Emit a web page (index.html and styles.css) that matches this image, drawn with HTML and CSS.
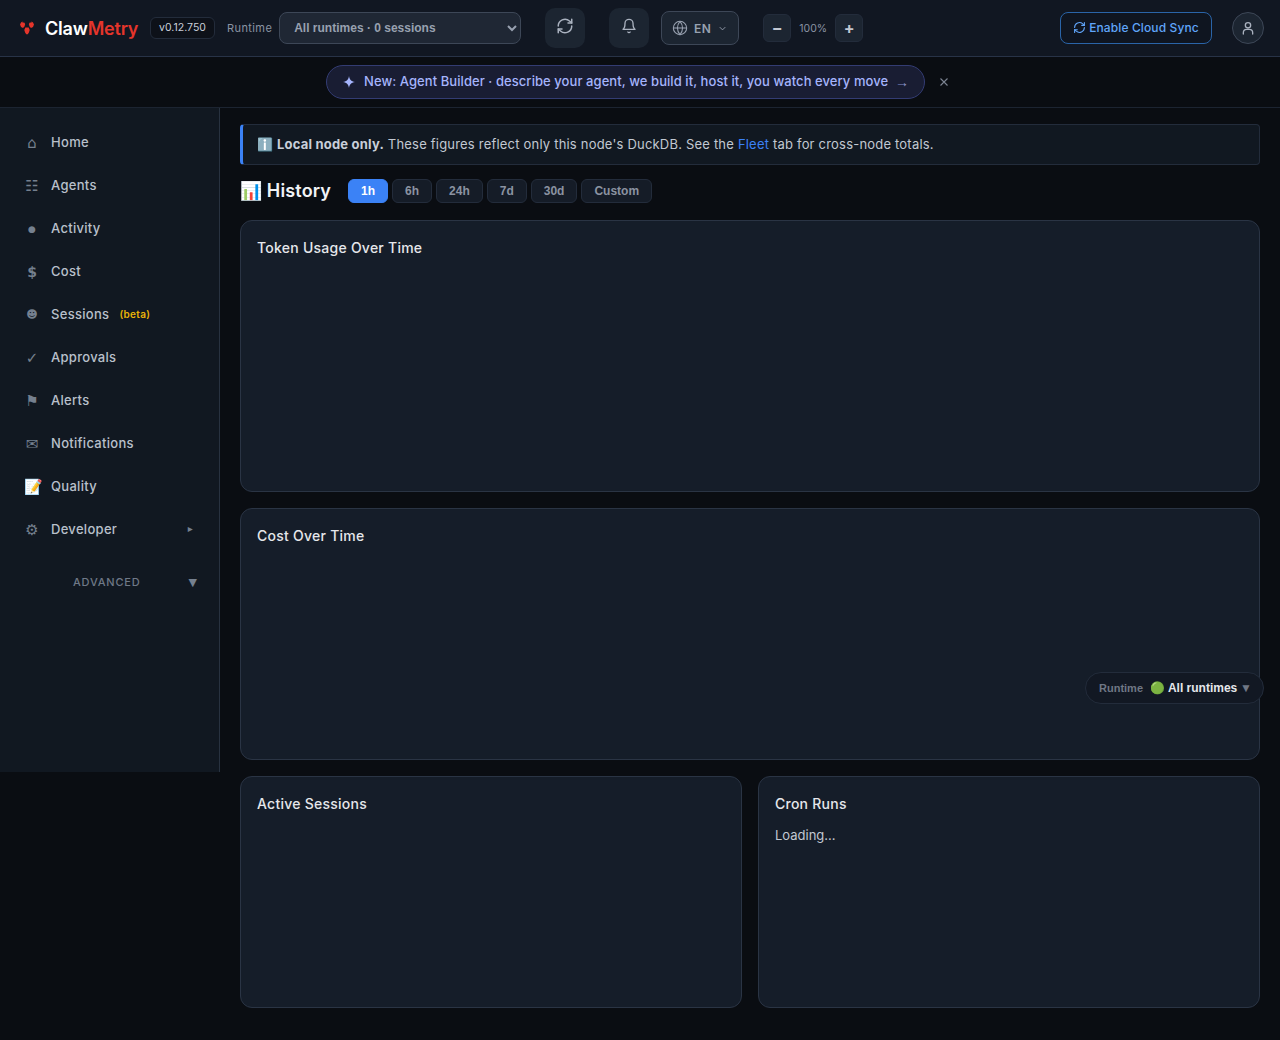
FILE: index.html
```html
<!doctype html>
<html lang="en-us">
  <head>
    <meta charset="utf-8">
    <title>ClawMetry</title>
    <link rel="stylesheet" href="styles.css">
  </head>
  <body>
    <header class="topbar">
      <div class="logo">
        <svg width="16" height="14" viewBox="0 0 16 14"><path fill="#e5352b" d="M1 3.500 2 1.500 3.500 .5l.3 1.500L5 1.200 6.200 3 5.500 5.500 4 7 2 6zM15 3.500 14 1.500 12.500 .5l-.3 1.500L11 1.200 9.800 3l.7 2.500L12 7l2-1zM6.300 6.500h3.400l1 2.500-.8 2.500-1.100 1.800H7.200l-1.100-1.800L5.300 9z"/></svg>
        <span class="logo-text">Claw<span class="logo-red">Metry</span></span>
      </div>
      <span class="version">v0.12.750</span>
      <label class="runtime-label" for="runtime">Runtime</label>
      <select class="runtime-select" id="runtime">
        <option>All runtimes · 0 sessions</option>
      </select>
      <button class="square-btn refresh-btn" type="button">
        <svg width="18" height="18" viewBox="0 0 24 24" fill="none" stroke="currentColor" stroke-width="2" stroke-linecap="round" stroke-linejoin="round"><path d="M3 12a9 9 0 0 1 15-6.700L21 8"/><path d="M21 3v5h-5"/><path d="M21 12a9 9 0 0 1-15 6.700L3 16"/><path d="M8 16H3v5"/></svg>
      </button>
      <button class="square-btn bell-btn" type="button">
        <svg width="16" height="16" viewBox="0 0 24 24" fill="none" stroke="currentColor" stroke-width="2" stroke-linecap="round" stroke-linejoin="round"><path d="M6 8a6 6 0 0 1 12 0c0 7 3 9 3 9H3s3-2 3-9"/><path d="M10.300 21a1.900 1.900 0 0 0 3.400 0"/></svg>
      </button>
      <button class="lang-btn" type="button">
        <svg width="16" height="16" viewBox="0 0 24 24" fill="none" stroke="currentColor" stroke-width="1.600"><circle cx="12" cy="12" r="10"/><path d="M2 12h20"/><path d="M12 2a15 15 0 0 1 0 20a15 15 0 0 1 0-20"/></svg>
        <span>EN</span>
        <svg width="11" height="11" viewBox="0 0 24 24" fill="none" stroke="currentColor" stroke-width="2"><path d="m6 9 6 6 6-6"/></svg>
      </button>
      <div class="zoom">
        <button class="zoom-btn" type="button">−</button>
        <span class="zoom-value">100%</span>
        <button class="zoom-btn" type="button">+</button>
      </div>
      <button class="sync-btn" type="button">
        <svg width="13" height="13" viewBox="0 0 24 24" fill="none" stroke="currentColor" stroke-width="2" stroke-linecap="round" stroke-linejoin="round"><path d="M3 12a9 9 0 0 1 15-6.700L21 8"/><path d="M21 3v5h-5"/><path d="M21 12a9 9 0 0 1-15 6.700L3 16"/><path d="M8 16H3v5"/></svg>
        <span>Enable Cloud Sync</span>
      </button>
      <button class="user-btn" type="button">
        <svg width="16" height="16" viewBox="0 0 24 24" fill="none" stroke="currentColor" stroke-width="2" stroke-linecap="round"><circle cx="12" cy="8" r="4"/><path d="M5 21v-2a5 5 0 0 1 5-5h4a5 5 0 0 1 5 5v2"/></svg>
      </button>
    </header>

    <div class="banner-row">
      <a class="banner">
        <svg width="12" height="12" viewBox="0 0 12 12"><path fill="#a5b4fc" d="M6 0c.5 3.600 2 5.300 6 6-4 .7-5.500 2.400-6 6-.5-3.600-2-5.300-6-6 4-.7 5.500-2.400 6-6z"/></svg>
        <span class="banner-text">New: Agent Builder · describe your agent, we build it, host it, you watch every move</span>
        <span class="banner-arrow">→</span>
      </a>
      <svg class="banner-close" width="8" height="8" viewBox="0 0 8 8" fill="none" stroke="currentColor" stroke-width="1.100"><path d="M.5.5l7 7M7.500.5l-7 7"/></svg>
    </div>

    <div class="layout">
      <nav class="sidebar">
        <a class="nav-item"><span class="nav-icon">⌂</span>Home</a>
        <a class="nav-item"><span class="nav-icon">☷</span>Agents</a>
        <a class="nav-item"><span class="nav-icon icon-dot">●</span>Activity</a>
        <a class="nav-item"><span class="nav-icon icon-cost">$</span>Cost</a>
        <a class="nav-item"><span class="nav-icon icon-face">☻</span>Sessions<span class="beta">(beta)</span></a>
        <a class="nav-item"><span class="nav-icon">✓</span>Approvals</a>
        <a class="nav-item"><span class="nav-icon">⚑</span>Alerts</a>
        <a class="nav-item"><span class="nav-icon">✉</span>Notifications</a>
        <a class="nav-item"><span class="nav-icon">📝</span>Quality</a>
        <a class="nav-item"><span class="nav-icon">⚙</span>Developer<span class="nav-caret">▸</span></a>
        <div class="nav-advanced"><span>ADVANCED</span><span class="advanced-caret">▼</span></div>
      </nav>

      <main class="content">
        <div class="notice">ℹ️ <b>Local node only.</b> These figures reflect only this node's DuckDB. See the <a class="notice-link">Fleet</a> tab for cross-node totals.</div>
        <div class="history-head">
          <h2 class="history-title">📊 History</h2>
          <div class="ranges">
            <button class="range active" type="button">1h</button>
            <button class="range" type="button">6h</button>
            <button class="range" type="button">24h</button>
            <button class="range" type="button">7d</button>
            <button class="range" type="button">30d</button>
            <button class="range" type="button">Custom</button>
          </div>
        </div>
        <section class="card token-card"><h3 class="card-title">Token Usage Over Time</h3></section>
        <section class="card cost-card"><h3 class="card-title">Cost Over Time</h3></section>
        <div class="card-row">
          <section class="card low-card"><h3 class="card-title">Active Sessions</h3></section>
          <section class="card low-card"><h3 class="card-title">Cron Runs</h3><p class="loading">Loading...</p></section>
        </div>
      </main>
    </div>

    <div class="runtime-pill">
      <span class="pill-label">Runtime</span>
      <span class="pill-value"><span class="pill-dot">🟢</span> All runtimes</span>
      <span class="pill-caret">▼</span>
    </div>
  </body>
</html>
```

FILE: styles.css
```css
* { box-sizing: border-box; }

body {
  margin: 0;
  height: 1040px;
  overflow: hidden;
  background: #0a0d12;
  color: #e5e7eb;
  font-family: "Inter", "Noto Sans", sans-serif;
}

button { font-family: inherit; cursor: pointer; }

/* top bar */
.topbar {
  height: 57px;
  display: flex;
  align-items: center;
  padding: 0 16px 0 19px;
  background: #111722;
  border-bottom: 1px solid #283347;
}

.logo { display: flex; align-items: center; gap: 10px; width: 131px; }
.logo-text { font-size: 18px; font-weight: 600; color: #fff; letter-spacing: -0.2px; }
.logo-red { color: #e5352b; }

.version {
  width: 65px;
  height: 22px;
  line-height: 20px;
  text-align: center;
  font-size: 10.5px;
  color: #c9cfd9;
  background: #0d1119;
  border: 1px solid #232c3b;
  border-radius: 6px;
}

.runtime-label { margin-left: 12px; font-size: 11px; color: #8a93a3; letter-spacing: 0.4px; }

.runtime-select {
  width: 242px;
  height: 32px;
  margin-left: 7px;
  padding: 0 10px;
  background: #1f2734;
  color: #98a1b0;
  border: 1px solid #3d4757;
  border-radius: 8px;
  font: bold 12px "Liberation Sans", sans-serif;
}

.square-btn {
  width: 40px;
  height: 40px;
  display: flex;
  align-items: center;
  justify-content: center;
  padding: 0 0 5px;
  background: #1c2531;
  color: #aab2bf;
  border: 0;
  border-radius: 10px;
}
.refresh-btn { margin-left: 24px; }
.bell-btn { margin-left: 24px; }

.lang-btn {
  width: 78px;
  height: 34px;
  margin-left: 12px;
  display: flex;
  align-items: center;
  justify-content: center;
  gap: 6px;
  padding: 0;
  background: #1c2531;
  color: #98a1b0;
  border: 1px solid #3d4757;
  border-radius: 8px;
  font-size: 12px;
  font-weight: 600;
  letter-spacing: 0.5px;
}

.zoom { margin-left: 24px; display: flex; align-items: center; gap: 8px; }
.zoom-btn {
  width: 28px;
  height: 28px;
  padding: 0;
  background: #1c2531;
  color: #c2c8d2;
  border: 1px solid #232c3b;
  border-radius: 6px;
  font-size: 16px;
  font-weight: 700;
  line-height: 1;
}
.zoom-value { width: 28px; text-align: center; font-size: 10.5px; color: #8a93a3; }

.sync-btn {
  width: 152px;
  height: 32px;
  margin-left: auto;
  display: flex;
  align-items: center;
  justify-content: center;
  gap: 3px;
  padding: 0 0 1px;
  background: #0f1520;
  color: #60a5fa;
  border: 1px solid #2a64a8;
  border-radius: 8px;
  font-size: 12px;
  font-weight: 500;
  letter-spacing: 0.12px;
}

.user-btn {
  width: 32px;
  height: 32px;
  margin-left: 20px;
  padding: 0;
  display: flex;
  align-items: center;
  justify-content: center;
  background: #1c2531;
  color: #aab2bf;
  border: 1px solid #3d4757;
  border-radius: 50%;
}

/* announcement */
.banner-row {
  height: 51px;
  display: flex;
  align-items: center;
  justify-content: center;
  gap: 15px;
  padding-right: 6px;
  background: #0a0d12;
  border-bottom: 1px solid #1c2431;
}

.banner {
  width: 599px;
  height: 34px;
  display: flex;
  align-items: center;
  padding: 0 15px 2px 16px;
  background: #191d33;
  color: #a5b4fc;
  border: 1px solid #333c73;
  border-radius: 17px;
  font-size: 13px;
  font-weight: 500;
}
.banner svg { margin-top: 2px; }
.banner-text { margin-left: 9px; white-space: nowrap; letter-spacing: 0.07px; }
.banner-arrow { margin: 2px 0 0 auto; font: 14px "Liberation Sans", sans-serif; color: #8b93c8; }
.banner-close { color: #7c8492; }

/* page */
.layout { display: flex; align-items: flex-start; }

.sidebar {
  width: 220px;
  height: 664px;
  flex: none;
  padding: 12px 24px 0;
  background: #111821;
  border-right: 1px solid #283240;
}

.nav-item {
  height: 43px;
  display: flex;
  align-items: center;
  color: #b9c0cb;
  font-size: 13px;
  font-weight: 500;
  letter-spacing: 0.3px;
}
.nav-icon {
  width: 16px;
  margin-right: 11px;
  flex: none;
  text-align: center;
  font-size: 15px;
  line-height: 16px;
  letter-spacing: 0;
  color: #75808f;
  font-family: "DejaVu Sans", "Noto Color Emoji", sans-serif;
  padding-top: 2px;
}
.icon-dot { font-size: 9px; }
.icon-cost { font-size: 14px; font-weight: bold; }
.icon-face { font-size: 11px; }

.beta { margin-left: 10px; font-size: 10px; font-weight: 600; color: #eab308; letter-spacing: 0.3px; }
.nav-caret { margin-left: auto; margin-right: 2px; font-size: 10px; color: #75808f; font-family: "DejaVu Sans", sans-serif; }

.nav-advanced {
  display: flex;
  justify-content: space-between;
  height: 24px;
  margin: 20px -2px 0 0;
  padding-left: 49px;
  align-items: center;
  font-size: 11px;
  font-weight: 500;
  letter-spacing: 0.8px;
  color: #6f7987;
}
.advanced-caret { font-size: 11px; letter-spacing: 0; font-family: "DejaVu Sans", sans-serif; color: #75808f; }

.content { flex: 1; min-width: 0; padding: 16px 20px 0; display: flex; flex-direction: column; }

.notice {
  height: 41px;
  line-height: 38px;
  padding-left: 14px;
  background: #111821;
  border: 1px solid #232c3b;
  border-left: 3px solid #3b82f6;
  border-radius: 4px;
  font-size: 13px;
  letter-spacing: 0.2px;
  color: #c2c8d2;
  white-space: nowrap;
}
.notice b { font-weight: 700; color: #c9cfd9; }
.notice-link { color: #3b82f6; }

.history-head { display: flex; align-items: center; height: 24px; margin-top: 14px; }
.history-title { margin: 0 0 1px; width: 108px; font-size: 18px; font-weight: 600; letter-spacing: 0.15px; color: #f1f3f6; }
.ranges { display: flex; gap: 4px; }
.range {
  height: 24px;
  padding: 0 12px;
  background: #151c27;
  color: #8b93a1;
  border: 1px solid #232c3b;
  border-radius: 6px;
  font: bold 12px "Liberation Sans", sans-serif;
}
.range.active { background: #3b82f6; border-color: #3b82f6; color: #fff; }

.card {
  background: #151d29;
  border: 1px solid #2a3444;
  border-radius: 12px;
  padding: 18px 16px;
}
.card-title { margin: 0; font-size: 14px; line-height: 18px; font-weight: 500; color: #e5e7eb; letter-spacing: 0.25px; }
.token-card { height: 272px; margin-top: 17px; }
.cost-card { height: 252px; margin-top: 16px; }
.card-row { display: grid; grid-template-columns: 1fr 1fr; gap: 16px; margin-top: 16px; }
.low-card { height: 232px; }
.loading { margin: 14px 0 0; font-size: 13px; color: #c2c8d2; }

/* floating runtime switch */
.runtime-pill {
  position: fixed;
  right: 16px;
  top: 672px;
  width: 179px;
  height: 32px;
  display: flex;
  align-items: center;
  padding: 0 11px 0 13px;
  background: #121823;
  border: 1px solid #232c3b;
  border-radius: 16px;
  font: bold 11px "Liberation Sans", sans-serif;
}
.pill-label { color: #6f7785; }
.pill-value { margin-left: 7px; font-size: 12px; color: #e5e7eb; white-space: nowrap; }
.pill-caret { margin-left: auto; font-size: 12px; color: #6f7785; }
```
